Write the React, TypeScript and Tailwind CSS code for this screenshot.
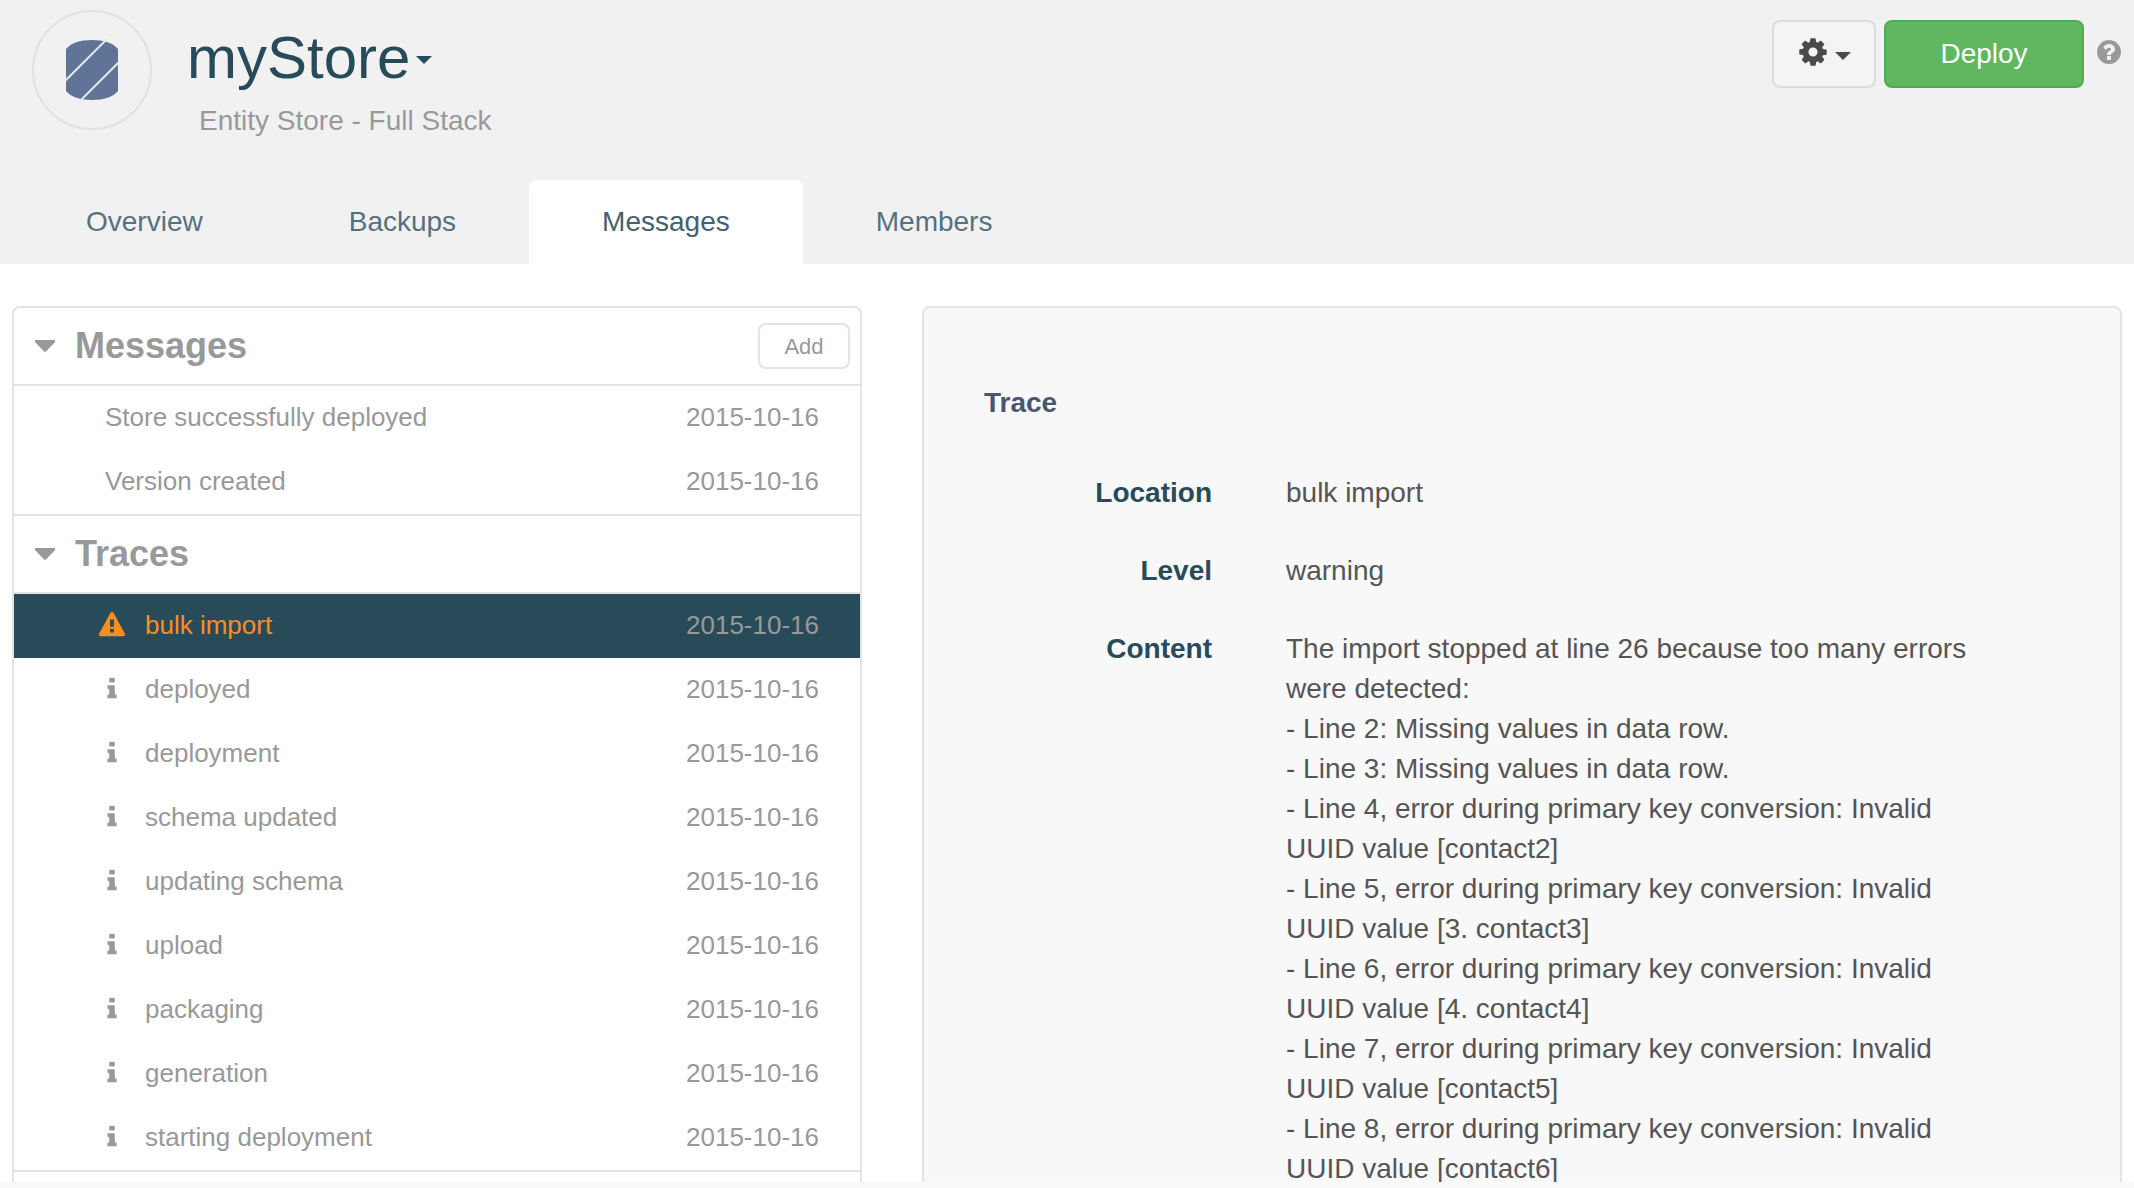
import React from "react";

const COG =
  "M1152 896q0-106-75-181t-181-75-181 75-75 181 75 181 181 75 181-75 75-181zm512-109v222q0 12-8 23t-20 13l-185 28q-19 54-39 91 35 50 107 138 10 12 10 25t-9 23q-27 37-99 108t-94 71q-12 0-26-9l-138-108q-44 23-91 38-16 136-29 186-7 28-36 28h-222q-14 0-24.5-8.5t-11.5-21.5l-28-184q-49-16-90-37l-141 107q-10 9-25 9-14 0-25-11-126-114-165-168-7-10-7-23 0-12 8-23 15-21 51-66.5t54-70.5q-27-50-41-99l-183-27q-13-2-21-12.5t-8-23.5v-222q0-12 8-23t19-13l186-28q14-46 39-92-40-57-107-138-10-12-10-24 0-10 9-23 26-36 98.5-107.5t94.5-71.5q13 0 26 10l138 107q44-23 91-38 16-136 29-186 7-28 36-28h222q14 0 24.5 8.5t11.5 21.5l28 184q49 16 90 37l142-107q9-9 24-9 13 0 25 10 129 119 165 170 7 8 7 22 0 12-8 23-15 21-51 66.5t-54 70.5q26 50 41 98l183 28q13 2 21 12.5t8 23.5z";
const WARNING =
  "M1024 1375v-190q0-14-9.5-23.5t-22.5-9.5h-192q-13 0-22.5 9.5t-9.5 23.5v190q0 14 9.5 23.5t22.5 9.5h192q13 0 22.5-9.5t9.5-23.5zm-2-374l18-459q0-12-10-19-13-11-24-11h-220q-11 0-24 11-10 7-10 21l17 457q0 10 10 16.5t24 6.5h185q14 0 23.5-6.5t10.5-16.5zm-14-934l768 1408q35 63-2 126-17 29-46.5 46t-63.5 17h-1536q-34 0-63.5-17t-46.5-46q-37-63-2-126l768-1408q17-31 47-49t65-18 65 18 47 49z";
const INFO =
  "M1216 1344v128q0 26-19 45t-45 19h-512q-26 0-45-19t-19-45v-128q0-26 19-45t45-19h64v-384h-64q-26 0-45-19t-19-45v-128q0-26 19-45t45-19h384q26 0 45 19t19 45v576h64q26 0 45 19t19 45zm-128-1152v192q0 26-19 45t-45 19h-256q-26 0-45-19t-19-45v-192q0-26 19-45t45-19h256q26 0 45 19t19 45z";
const QUESTION =
  "M1024 1376v-192q0-14-9-23t-23-9h-192q-14 0-23 9t-9 23v192q0 14 9 23t23 9h192q14 0 23-9t9-23zm256-672q0-88-55.5-163t-138.5-116-170-41q-243 0-371 213-15 24 8 42l132 100q7 6 19 6 16 0 25-12 53-68 86-92 34-24 86-24 48 0 85.5 26t37.5 59q0 38-20 61t-68 45q-63 28-115.5 86.5t-52.5 125.5v36q0 14 9 23t23 9h192q14 0 23-9t9-23q0-19 21.5-49.5t54.5-49.5q32-18 49-28.5t46-35 44.5-48 28-60.5 12.5-81zm384 192q0 209-103 385.5t-279.5 279.5-385.5 103-385.5-103-279.5-279.5-103-385.5 103-385.5 279.5-279.5 385.5-103 385.5 103 279.5 279.5 103 385.5z";

function Glyph({ d, className }: { d: string; className: string }) {
  return (
    <svg viewBox="0 0 1792 1792" fill="currentColor" className={className} aria-hidden="true">
      <path d={d} />
    </svg>
  );
}

function Caret({ className }: { className: string }) {
  return (
    <svg viewBox="0 0 16 8" fill="currentColor" className={className} aria-hidden="true">
      <path d="M0 0h16L8 8z" />
    </svg>
  );
}

function StoreLogo() {
  return (
    <span className="flex size-[120px] shrink-0 items-center justify-center rounded-full border-2 border-[#dfe2e8]">
      <svg viewBox="0 0 54 62" className="h-[62px] w-[54px]" aria-hidden="true">
        <path d="M1 10C6 4 15 1 27 1s21 3 26 9v42c-5 6-14 9-26 9S6 58 1 52z" fill="#5f7497" />
        <path d="M0 42 42 0M15 62 54 23" stroke="#e6e8ec" strokeWidth="2" />
      </svg>
    </span>
  );
}

const TABS = ["Overview", "Backups", "Messages", "Members"];

const MESSAGES = [
  { text: "Store successfully deployed", date: "2015-10-16" },
  { text: "Version created", date: "2015-10-16" },
];

const TRACES = [
  { text: "bulk import", date: "2015-10-16", warning: true },
  { text: "deployed", date: "2015-10-16" },
  { text: "deployment", date: "2015-10-16" },
  { text: "schema updated", date: "2015-10-16" },
  { text: "updating schema", date: "2015-10-16" },
  { text: "upload", date: "2015-10-16" },
  { text: "packaging", date: "2015-10-16" },
  { text: "generation", date: "2015-10-16" },
  { text: "starting deployment", date: "2015-10-16" },
];

const CONTENT = [
  "The import stopped at line 26 because too many errors were detected:",
  "- Line 2: Missing values in data row.",
  "- Line 3: Missing values in data row.",
  "- Line 4, error during primary key conversion: Invalid UUID value [contact2]",
  "- Line 5, error during primary key conversion: Invalid UUID value [3. contact3]",
  "- Line 6, error during primary key conversion: Invalid UUID value [4. contact4]",
  "- Line 7, error during primary key conversion: Invalid UUID value [contact5]",
  "- Line 8, error during primary key conversion: Invalid UUID value [contact6]",
];

function SectionHeader({ title, children }: { title: string; children?: React.ReactNode }) {
  return (
    <div className="flex h-[78px] items-center border-b-2 border-[#e4e4e4] pr-[10px] pl-5">
      <button type="button" className="flex items-center gap-[19px] text-[#999]">
        <svg viewBox="0 0 22 12" fill="currentColor" className="h-3 w-[22px]" aria-hidden="true">
          <path d="M2 0h18q2 .6.8 2.200l-8.600 9q-1.200 1-2.400 0l-8.600-9Q0 .6 2 0z" />
        </svg>
        <h2 className="text-4xl font-bold">{title}</h2>
      </button>
      <div className="ml-auto">{children}</div>
    </div>
  );
}

function DetailRow({ label, children }: { label: string; children: React.ReactNode }) {
  return (
    <div className="flex gap-[74px]">
      <dt className="w-[228px] shrink-0 text-right font-bold text-[#284b5a]">{label}</dt>
      <dd className="min-w-0 flex-1 text-[#555]">{children}</dd>
    </div>
  );
}

export default function App() {
  return (
    <div className="flex h-screen flex-col bg-[#fafafa] pb-[6px] font-['Liberation_Sans',Arial,sans-serif]">
      <header className="shrink-0 bg-[#f1f1f1]">
        <div className="flex h-[180px] items-start pr-[11px] pl-8">
          <div className="pt-[10px]">
            <StoreLogo />
          </div>
          <div className="pt-6 pl-[35px]">
            <h1>
              <button type="button" className="flex items-center gap-[6px] text-6xl leading-[68px] text-[#284b5a]">
                myStore
                <Caret className="mt-1 h-2 w-4" />
              </button>
            </h1>
            <p className="pt-[9px] pl-3 text-[28px] leading-10 text-[#999]">Entity Store - Full Stack</p>
          </div>
          <div className="ml-auto flex items-start pt-5">
            <button
              type="button"
              aria-label="Settings"
              className="flex h-[68px] w-[104px] items-center justify-center gap-[6px] rounded-lg border-2 border-[#dcdcdc] bg-[#f4f4f4] text-[#4a4a4a]"
            >
              <Glyph d={COG} className="mb-1 size-8" />
              <Caret className="mt-1 h-2 w-4" />
            </button>
            <button
              type="button"
              className="ml-2 h-[68px] w-[200px] rounded-lg border-2 border-[#51ac51] bg-[#5fb760] text-[28px] text-white"
            >
              Deploy
            </button>
            <a href="#help" aria-label="Help" className="mt-[18px] ml-[11px] text-[#999]">
              <Glyph d={QUESTION} className="size-7" />
            </a>
          </div>
        </div>
        <nav className="flex pl-[13px]">
          {TABS.map((tab) => (
            <a
              key={tab}
              href={`#${tab.toLowerCase()}`}
              className={
                tab === "Messages"
                  ? "rounded-t-lg bg-white px-[73px] text-[28px] leading-[84px] text-[#45606e]"
                  : "px-[73px] text-[28px] leading-[84px] text-[#56717e]"
              }
            >
              {tab}
            </a>
          ))}
        </nav>
      </header>

      <main className="grid min-h-0 flex-1 grid-cols-[17fr_24fr] gap-[60px] overflow-hidden bg-white px-3 pt-[42px]">
        <section className="overflow-hidden rounded-t-lg border-2 border-b-0 border-[#e4e4e4]">
          <SectionHeader title="Messages">
            <button
              type="button"
              className="h-[46px] w-[92px] rounded-lg border-2 border-[#e4e4e4] text-[22px] text-[#999]"
            >
              Add
            </button>
          </SectionHeader>
          <ul className="border-b-2 border-[#e4e4e4] text-[26px] leading-[62px] text-[#999]">
            {MESSAGES.map((message) => (
              <li key={message.text} className="flex justify-between pr-[41px] pb-[2px] pl-[91px]">
                <a href="#message">{message.text}</a>
                <time>{message.date}</time>
              </li>
            ))}
          </ul>
          <SectionHeader title="Traces" />
          <ul className="border-b-2 border-[#e4e4e4] text-[26px] leading-[62px] text-[#999]">
            {TRACES.map((trace) => (
              <li
                key={trace.text}
                className={
                  trace.warning
                    ? "flex justify-between bg-[#284b5a] pr-[41px] pb-[2px] pl-[85px]"
                    : "flex justify-between pr-[41px] pb-[2px] pl-[85px]"
                }
              >
                <a
                  href="#trace"
                  className={trace.warning ? "flex items-center gap-5 text-[#ff8c1f]" : "flex items-center gap-5"}
                >
                  <Glyph d={trace.warning ? WARNING : INFO} className="size-[26px]" />
                  {trace.text}
                </a>
                <time>{trace.date}</time>
              </li>
            ))}
          </ul>
        </section>

        <section className="overflow-hidden rounded-t-lg border-2 border-b-0 border-[#e4e4e4] bg-[#f8f8f8] px-[60px] pt-[75px] text-[28px] leading-10">
          <h2 className="font-bold text-[#4a5670]">Trace</h2>
          <dl className="flex flex-col gap-[38px] pt-[50px] pr-[60px]">
            <DetailRow label="Location">bulk import</DetailRow>
            <DetailRow label="Level">warning</DetailRow>
            <DetailRow label="Content">
              {CONTENT.map((line) => (
                <p key={line}>{line}</p>
              ))}
            </DetailRow>
          </dl>
        </section>
      </main>
    </div>
  );
}
